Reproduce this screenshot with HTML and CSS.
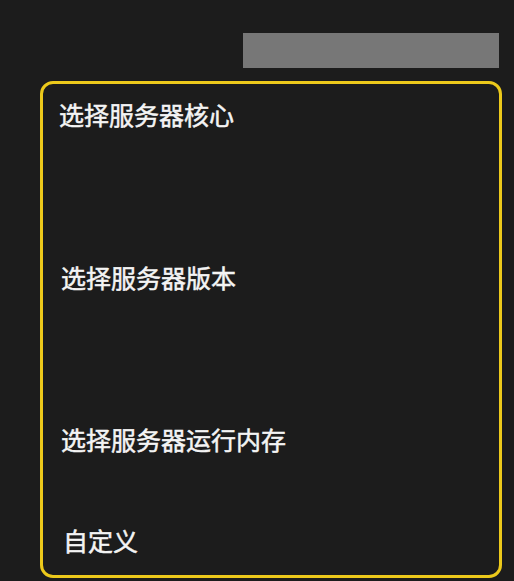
FILE: index.html
```html
<!DOCTYPE html>
<html lang="zh-CN">
<head>
    <meta charset="UTF-8">
    <meta name="viewport" content="width=device-width, initial-scale=1.0">
    <title>创建服务器</title>
    <link rel="stylesheet" href="styles.css">
</head>
<body>
    <div class="top-bar">
        <div class="search-box"></div>
    </div>

    <div class="setup-panel">
        <div class="section section-core">
            <div class="label first">选择服务器核心</div>
            <div class="picker"></div>
        </div>
        <div class="section section-version">
            <div class="label">选择服务器版本</div>
            <div class="picker"></div>
        </div>
        <div class="section section-memory">
            <div class="label">选择服务器运行内存</div>
            <div class="picker"></div>
        </div>
        <div class="section">
            <div class="label custom">自定义</div>
        </div>
    </div>
</body>
</html>
```

FILE: styles.css
```css
body {
    margin: 0;
    background: #1c1c1c;
    font-family: "Noto Sans CJK SC", "Noto Sans", sans-serif;
    color: #f4f4f4;
}
.top-bar {
    display: flex;
    justify-content: flex-end;
    padding: 33px 15px 0 0;
}
.search-box {
    width: 256px;
    height: 35px;
    background: #777777;
}
.setup-panel {
    margin: 13px 0 0 40px;
    width: 462px;
    height: 497px;
    box-sizing: border-box;
    border: 3px solid #ecc91b;
    border-radius: 13px;
    padding: 13px 0 0 0;
    display: flex;
    flex-direction: column;
}
.section {
    display: flex;
    flex-direction: column;
}
.section-core { height: 163px; }
.section-version { height: 162px; }
.section-memory { height: 101px; }
.label {
    font-size: 25px;
    line-height: 34px;
    font-weight: 400;
    -webkit-text-stroke: 0.5px #f4f4f4;
    padding-left: 18px;
}
.label.first { padding-left: 16px; }
.label.custom { padding-left: 20px; }
.picker {
    flex: 1;
}
```
